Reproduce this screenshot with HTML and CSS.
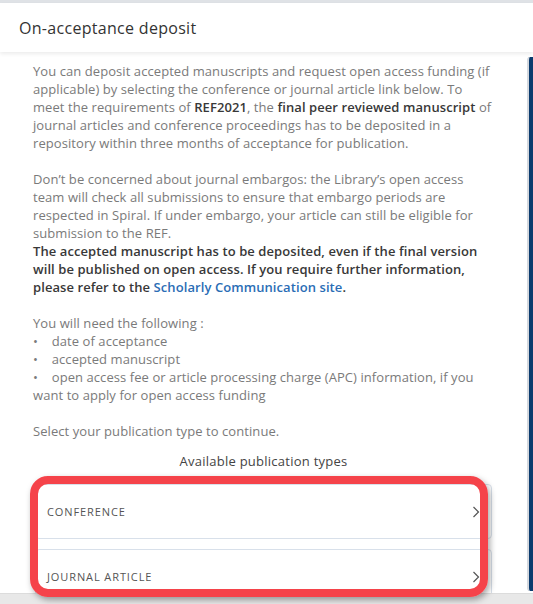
FILE: index.html
```html
<!DOCTYPE html>
<html>
<head>
<meta charset="utf-8">
<link rel="stylesheet" href="styles.css">
</head>
<body>
<div class="modal">
  <div class="top-strip"></div>
  <div class="header">On-acceptance deposit</div>
  <div class="main">
    <div class="content">
      <p>You can deposit accepted manuscripts and request open access funding (if applicable) by selecting the conference or journal article link below. To meet the requirements of <b>REF2021</b>, the <b>final peer reviewed manuscript</b> of journal articles and conference proceedings has to be deposited in a repository within three months of acceptance for publication.</p>
      <p>Don’t be concerned about journal embargos: the Library’s open access team will check all submissions to ensure that embargo periods are respected in Spiral. If under embargo, your article can still be eligible for submission to the REF.<br><b>The accepted manuscript has to be deposited, even if the final version will be published on open access. If you require further information, please refer to the <a class="link">Scholarly Communication site</a>.</b></p>
      <p>You will need the following :<br>•&nbsp;&nbsp;&nbsp;&nbsp;date of acceptance<br>•&nbsp;&nbsp;&nbsp;&nbsp;accepted manuscript<br>•&nbsp;&nbsp;&nbsp;&nbsp;open access fee or article processing charge (APC) information, if you want to apply for open access funding</p>
      <p>Select your publication type to continue.</p>
      <div class="types">
        <div class="types-title">Available publication types</div>
        <div class="card">
          <span class="card-label">CONFERENCE</span>
          <svg class="chev" width="8" height="12" viewBox="0 0 8 12"><polyline points="1.5,1 6.5,6 1.5,11" fill="none" stroke="#555" stroke-width="1.2"/></svg>
        </div>
        <div class="card">
          <span class="card-label">JOURNAL ARTICLE</span>
          <svg class="chev" width="8" height="12" viewBox="0 0 8 12"><polyline points="1.5,1 6.5,6 1.5,11" fill="none" stroke="#555" stroke-width="1.2"/></svg>
        </div>
      </div>
    </div>
    <div class="scrollbar"><div class="thumb"></div></div>
  </div>
  <div class="bottom-strip"></div>
</div>
<div class="annotation"></div>
</body>
</html>
```
FILE: styles.css
```css
html, body {
  margin: 0;
  padding: 0;
}
body {
  width: 533px;
  height: 604px;
  overflow: hidden;
  background: #e9ebee;
  font-family: "Open Sans", "Liberation Sans", sans-serif;
  position: relative;
}
.modal {
  display: flex;
  flex-direction: column;
  height: 604px;
}
.top-strip {
  height: 3px;
  background: #dfe2e6;
  flex: none;
}
.header {
  flex: none;
  height: 49px;
  background: #fff;
  display: flex;
  align-items: center;
  padding-left: 19px;
  font-size: 16px;
  letter-spacing: 0.3px;
  color: #333;
  box-shadow: 0 2px 4px rgba(0,0,0,0.08);
  position: relative;
  z-index: 1;
}
.main {
  flex: 1;
  display: flex;
  background: #fff;
  overflow: hidden;
}
.content {
  flex: 1;
  padding: 10px 33px 0 33px;
  font-size: 13px;
  line-height: 18px;
  letter-spacing: 0.07px;
  color: #7a7a7a;
  overflow: hidden;
}
.content p {
  margin: 0 0 18px 0;
}
.content b {
  color: #383838;
  font-weight: 600;
  letter-spacing: 0.08px;
}
.link {
  color: #2a6db5;
}
.types {
  margin: -6px 2px 0 2px;
}
.types-title {
  text-align: center;
  color: #444;
  font-size: 13px;
  line-height: 18px;
  letter-spacing: 0.25px;
  margin-bottom: 14px;
}
.card {
  height: 53px;
  border: 1px solid #d8e0ea;
  border-radius: 4px;
  display: flex;
  align-items: center;
  justify-content: space-between;
  padding: 0 11px 0 11px;
  margin-bottom: 10px;
}
.card-label {
  font-size: 11px;
  color: #555;
  letter-spacing: 0.9px;
}
.scrollbar {
  width: 6px;
  flex: none;
  padding: 5px 0 2px 0;
  background: #fff;
}
.thumb {
  height: 100%;
  background: #0b3b6e;
  border-left: 2px solid #d4d8de;
  border-radius: 3px 0 0 3px;
}
.bottom-strip {
  flex: none;
  height: 10px;
  background: #e8e8e8;
  border-top: 1px solid #dcdcdc;
}
.annotation {
  position: absolute;
  left: 30px;
  top: 476px;
  width: 458px;
  height: 121px;
  box-sizing: border-box;
  border: 8px solid #f5434a;
  border-radius: 18px;
  box-shadow: 2px 3px 6px rgba(0,0,0,0.35);
}
```
